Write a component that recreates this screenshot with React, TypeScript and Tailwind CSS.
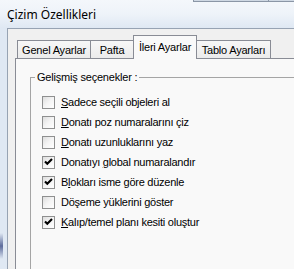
import React from "react";

const Check = ({ checked }: { checked: boolean }) => (
  <div className="w-[13px] h-[13px] shrink-0 border border-[#8e8f8f] bg-gradient-to-br from-[#dedede] via-[#f4f4f4] to-white flex items-center justify-center">
    {checked && (
      <svg width="11" height="11" viewBox="0 0 11 11">
        <path d="M2 4.5 L4.3 6.8 L9 2.1" fill="none" stroke="#000" strokeWidth="2.1" strokeLinecap="butt" />
      </svg>
    )}
  </div>
);

type Row = { checked: boolean; pre: string; key?: string; post: string };

const rows: Row[] = [
  { checked: false, pre: "", key: "S", post: "adece seçili objeleri al" },
  { checked: false, pre: "", key: "D", post: "onatı poz numaralarını çiz" },
  { checked: false, pre: "", key: "D", post: "onatı uzunluklarını yaz" },
  { checked: true, pre: "Donatıyı ", key: "g", post: "lobal numaralandır" },
  { checked: true, pre: "B", key: "l", post: "okları isme göre düzenle" },
  { checked: false, pre: "Döşeme yüklerini göster", post: "" },
  { checked: true, pre: "", key: "K", post: "alıp/temel planı kesiti oluştur" },
];

export default function App() {
  return (
    <div
      className="w-[294px] h-[269px] overflow-hidden flex flex-col bg-[#dfe8f3] text-black"
      style={{ fontFamily: '"Liberation Sans", Arial, sans-serif' }}
    >
      {/* title bar */}
      <div className="h-[28px] shrink-0 flex flex-col bg-gradient-to-b from-[#f4f7fb] via-[#eef3f9] to-[#dfe8f3]">
        <div className="h-[2px] flex">
          <div className="w-[193px]" />
          <div className="w-[76px] border-x border-b border-[#8b96a6] bg-[#cfd8e3]" />
          <div className="flex-1 border-b border-[#8b96a6] bg-[#cfd8e3]" />
        </div>
        <div
          className="flex-1 flex items-center pl-[7px] pb-[1px] text-[12px] text-black"
          style={{ fontFamily: '"Noto Sans", "Open Sans", sans-serif' }}
        >
          Çizim Özellikleri
        </div>
      </div>
      {/* body */}
      <div className="flex-1 flex min-h-0">
        <div className="w-[7px] shrink-0 flex flex-col">
          <div className="h-[205px]" />
          <div className="w-[3px] h-[26px] bg-gradient-to-b from-transparent via-[#5d6c9c] to-transparent" />
        </div>
        <div className="flex-1 min-w-0 border-l border-t border-[#97a3b3] bg-[#f0f0f0] flex flex-col pl-[7px] pt-[6px] overflow-hidden">
          {/* tab strip */}
          <div className="h-[23px] shrink-0 flex items-end pl-[2px] text-[11px] tracking-[-0.2px]">
            <div className="relative z-10 w-[74px] h-[18px] border border-b-0 border-[#898c95] bg-gradient-to-b from-[#f7f7f7] to-[#ebebeb] flex items-center justify-center pt-[1px]">
              Genel Ayarlar
            </div>
            <div className="relative z-10 -ml-px w-[44px] h-[18px] border border-b-0 border-[#898c95] bg-gradient-to-b from-[#f7f7f7] to-[#ebebeb] flex items-center justify-center pt-[1px]">
              Pafta
            </div>
            <div className="relative z-20 -ml-px w-[64px] h-[24px] mb-[-1px] border border-b-0 border-[#898c95] bg-[#f9f9f9] flex items-center justify-center pb-[1px]">
              İleri Ayarlar
            </div>
            <div className="relative z-10 -ml-px w-[75px] h-[18px] border border-b-0 border-[#898c95] bg-gradient-to-b from-[#f7f7f7] to-[#ebebeb] flex items-center justify-center pt-[1px]">
              Tablo Ayarları
            </div>
          </div>
          {/* panel */}
          <div className="flex-1 w-[320px] border-l border-t border-[#898c95] bg-[#f9f9f9] pl-[14px] pt-[12px]">
            <fieldset className="w-[320px] h-[260px] border-l border-t border-[#a5a5a5] pl-[11px] pt-[8px] m-0">
              <legend className="ml-[-7px] px-[2px] text-[11px] leading-[13px] tracking-[-0.2px]">
                Gelişmiş seçenekler :
              </legend>
              <div className="flex flex-col text-[11px] tracking-[-0.25px]">
                {rows.map((r, i) => (
                  <div key={i} className="h-[20px] flex items-center gap-[6px]">
                    <Check checked={r.checked} />
                    <span className="whitespace-nowrap">
                      {r.pre}
                      {r.key && <span className="underline underline-offset-[1px]">{r.key}</span>}
                      {r.post}
                    </span>
                  </div>
                ))}
              </div>
            </fieldset>
          </div>
        </div>
      </div>
    </div>
  );
}
